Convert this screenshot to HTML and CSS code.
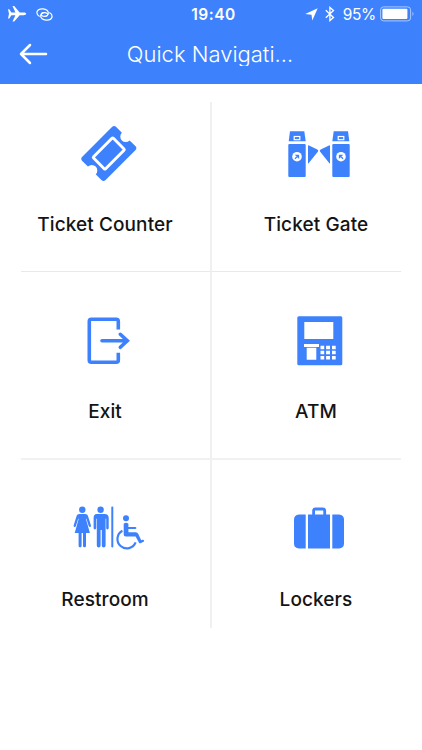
FILE: index.html
```html
<!DOCTYPE html>
<html lang="en">
<head>
    <meta charset="UTF-8">
    <meta name="viewport" content="width=device-width, initial-scale=1.0">
    <title>Quick Navigation</title>
    <link rel="stylesheet" href="styles.css">
</head>
<body>
    <header class="header">
        <div class="status-bar">
            <div class="status-left">
                <svg width="19" height="18" viewBox="0 0 19 18" fill="#fff">
                    <path d="M0 4.2h1.3l2.1 3.2h4L4.5 1h1.7l5.5 6.400h4.1c1.300 0 2.400.6 2.400 1.400s-1.100 1.400-2.400 1.400h-4.100l-5.500 6.400H4.500l2.900-6.400h-4l-2.100 3.200H0l1-4.600z"/>
                </svg>
                <svg width="17" height="13" viewBox="0 0 18 14" fill="none" stroke="#fff" stroke-width="1.300" stroke-linecap="round">
                    <path d="M3.400 8.800C1.400 7.700.6 6 .9 4.300 1.500 1.900 4.400.8 7.400 1c3.500.3 6 2.200 5.700 4.700-.2 2-2 3.300-4.300 3.300-2 0-3.400-1-3.200-2.300.1-.9.9-1.500 1.900-1.700"/>
                    <path d="M14.600 5.200c2 1.100 2.800 2.800 2.500 4.500-.6 2.400-3.500 3.500-6.500 3.300-3.500-.3-6-2.200-5.700-4.700.2-2 2-3.300 4.300-3.300 2 0 3.400 1 3.200 2.300-.1.9-.9 1.500-1.900 1.700"/>
                </svg>
            </div>
            <div class="status-time">19:40</div>
            <div class="status-right">
                <svg class="location" width="13" height="13" viewBox="0 0 13 13" fill="#fff">
                    <path d="M12.700.3 7.300 12.600 6.500 6.700.2 6z"/>
                </svg>
                <svg class="bluetooth" width="10" height="16" viewBox="0 0 10 16" fill="none" stroke="#fff" stroke-width="1.300">
                    <path d="M.8 4.300 8.500 11.500 4.900 14.600V1.400l3.600 3.100L.8 11.700"/>
                </svg>
                <span class="percent">95%</span>
                <svg width="35" height="16" viewBox="0 0 35 16">
                    <rect x=".6" y=".9" width="30" height="14" rx="3" fill="none" stroke="#a9c8ff" stroke-width="1"/>
                    <rect x="2.400" y="2.700" width="25" height="10.400" rx="1" fill="#fff"/>
                    <path d="M32.500 5.500q2 2.400 0 4.800z" fill="#a9c8ff"/>
                </svg>
            </div>
        </div>
        <div class="nav-bar">
            <a class="back" href="#" aria-label="Back">
                <svg width="30" height="24" viewBox="0 0 30 24" fill="none" stroke="#fff" stroke-width="2.500" stroke-linecap="round" stroke-linejoin="round">
                    <path d="M27 12H2M11 3 2 12l9 9"/>
                </svg>
            </a>
            <h1 class="title">Quick Navigati…</h1>
        </div>
    </header>

    <main class="grid">
        <a class="item" href="#">
            <svg class="icon" viewBox="0 0 90 80">
                <g transform="translate(48.800 40.500) rotate(-45)">
                    <path d="M-21-16.500h42q3 0 3 3v8a5.500 5.500 0 0 0 0 11v8q0 3-3 3h-42q-3 0-3-3v-8a5.500 5.500 0 0 0 0-11v-8q0-3 3-3z"/>
                    <rect class="line" x="-14" y="-8.500" width="28" height="17" rx="1" stroke-width="2.900"/>
                </g>
            </svg>
            <span class="label">Ticket Counter</span>
        </a>
        <a class="item" href="#">
            <svg class="icon" viewBox="0 0 90 80">
                <defs>
                    <g id="gate">
                        <path d="M19 18.300h14.300l1.400 10H17.700z"/>
                        <rect x="17.300" y="31" width="17.400" height="33" rx="1"/>
                        <rect class="line" x="23.200" y="23.500" width="5.600" height="3.200" stroke-width="1.200"/>
                        <circle class="cut" cx="26" cy="43.700" r="4.800"/>
                        <path d="M24 45.700 26.300 43.400M25.300 42.300h2.200v2.200z" stroke="#3d82fc" stroke-width="1.300"/>
                        <path d="M37 33q0-1 1-.5l8.300 4q1.500.8.700 2L37.800 50q-.8 1-.8 0z"/>
                    </g>
                </defs>
                <use href="#gate"/>
                <use href="#gate" transform="translate(96 0) scale(-1 1)"/>
            </svg>
            <span class="label">Ticket Gate</span>
        </a>
        <a class="item" href="#">
            <svg class="icon outline" viewBox="0 0 90 80">
                <path d="M58.300 28.500V20.300q0-2-2-2H31.300q-2 0-2 2v39q0 2 2 2h25q2 0 2-2v-7.600" stroke-width="3.600"/>
                <path d="M42 39.800h24.500M60.300 33.300l7 6.500-7 6.500" stroke-width="3.600" stroke-linecap="round"/>
            </svg>
            <span class="label">Exit</span>
        </a>
        <a class="item" href="#">
            <svg class="icon" viewBox="0 0 90 80">
                <rect x="26.300" y="15.300" width="45" height="49" rx="1.500"/>
                <rect class="cut" x="33.300" y="21" width="29" height="17"/>
                <path class="cut" d="M33 43h15v3H33zM35.700 46.700h9.600v12h-9.600z"/>
                <path class="cut" d="M49.500 44.700h3.700v3.500h-3.700zM55.100 44.700h3.900v3.500h-3.900zM61 44.700h3.700v3.500H61zM49.500 49.800h3.700v3.500h-3.700zM55.100 49.800h3.900v3.500h-3.900zM61 49.800h3.700v3.500H61zM49.500 54.900h3.700v3.500h-3.700zM55.100 54.900h3.900v3.500h-3.900zM61 54.900h3.700v3.500H61z"/>
            </svg>
            <span class="label">ATM</span>
        </a>
        <a class="item" href="#">
            <svg class="icon" viewBox="0 0 90 80">
                <circle cx="22.300" cy="21.700" r="3.200"/>
                <path d="M19.500 26h5.600c1.600 0 2.500.8 3 2.300l2.800 9c.5 1.800-1.500 2.500-2.200.8l-2.300-7.400h-.5l4 14.300H26v12.800c0 2-3 2-3 0V45h-1.400v12.800c0 2-3 2-3 0V45h-3.900l4-14.300h-.5l-2.300 7.400c-.7 1.700-2.700 1-2.200-.8l2.800-9c.5-1.500 1.400-2.300 3-2.300z"/>
                <circle cx="40.600" cy="21.700" r="3.200"/>
                <path d="M36.500 26h8.200c2.600 0 4 1.500 4 4v10c0 1.900-2.500 1.900-2.500 0v-9.200h-.6v26.700c0 2.500-3.800 2.500-3.800 0V42h-1.200v15.500c0 2.500-3.800 2.500-3.800 0V30.800h-.6V40c0 1.900-2.600 1.900-2.600 0V30c0-2.500 1.300-4 2.900-4z"/>
                <rect x="51.300" y="18.500" width="2" height="41" rx="1"/>
                <circle cx="66" cy="30.300" r="3"/>
                <path d="M63.700 35.700q2.300-2 4.700 0v3.200h6.700q1.300.1 1.300 1.100t-1.300 1.100h-6.700v3.200h7.400q1.700 0 2.400 1.500l3 6.500 1.300-.6q1.500-.2 1.700 1.100 0 .7-.7 1l-3 1.400q-1.100.3-1.600-.8L75.600 48.500H65.700q-2 0-2-2z"/>
                <path class="wheel" d="M62.400 42.700a9.400 9.400 0 1 0 13.200 11.700"/>
            </svg>
            <span class="label">Restroom</span>
        </a>
        <a class="item" href="#">
            <svg class="icon" viewBox="0 0 90 80">
                <path d="M28 26.500h6.700v34H28q-5-.5-5-5v-24q0-4.500 5-5zM37 26.500h22v34H37zM61.300 26.500H68q5 .5 5 5v24q0 4.500-5 5h-6.700z"/>
                <path class="handle" d="M42.600 27v-4.200q0-1.800 1.800-1.800h7.500q1.800 0 1.800 1.800V27"/>
            </svg>
            <span class="label">Lockers</span>
        </a>
    </main>
</body>
</html>
```

FILE: styles.css
```css
body {
    margin: 0;
    min-height: 100vh;
    background-color: #fff;
    font-family: 'Inter', 'Liberation Sans', sans-serif;
    color: #141414;
}

.header {
    height: 84px;
    background-color: #3d82fc;
    color: #fff;
}

.status-bar {
    display: grid;
    grid-template-columns: 1fr auto 1fr;
    align-items: center;
    height: 28px;
    padding: 0 7px 0 8px;
    box-sizing: border-box;
}

.status-left,
.status-right {
    display: flex;
    align-items: center;
}

.status-left {
    gap: 9px;
}

.status-right {
    justify-content: flex-end;
}

.status-time {
    font-size: 15.5px;
    font-weight: 600;
    letter-spacing: 0.5px;
    padding-left: 4px;
}

.location {
    margin-right: 7px;
}

.bluetooth {
    margin-right: 8px;
}

.percent {
    font-size: 15.5px;
    letter-spacing: -0.3px;
    margin-right: 4px;
}

.nav-bar {
    display: grid;
    grid-template-columns: 60px 1fr 60px;
    align-items: center;
    height: 52px;
}

.back {
    display: flex;
    padding-left: 19px;
}

.title {
    margin: 0 2px 0 0;
    font-size: 22px;
    font-weight: 350;
    line-height: 24px;
    letter-spacing: 0;
    text-align: center;
    white-space: nowrap;
    overflow: hidden;
}

.grid {
    display: grid;
    grid-template-columns: 191px 189px;
    grid-template-rows: 170px 188px 168px;
    margin: 18px 21px 0;
}

.item {
    display: flex;
    flex-direction: column;
    align-items: center;
    box-sizing: border-box;
    padding-top: 29px;
    border-bottom: 2px solid #f1f1f1;
    color: inherit;
    text-decoration: none;
}

.item:nth-child(odd) {
    padding-right: 21px;
    border-right: 2px solid #f0f0f0;
}

.item:nth-child(even) {
    padding-left: 19px;
}

.item:nth-child(-n+2) {
    padding-top: 11px;
    border-bottom: 1px solid #e9e9e9;
}

.item:nth-child(n+5) {
    padding-top: 28px;
    border-bottom: none;
}

.icon {
    width: 90px;
    height: 80px;
    fill: #3d82fc;
}

.icon .cut {
    fill: #fff;
}

.icon .line {
    fill: none;
    stroke: #fff;
}

.icon .wheel,
.icon .handle {
    fill: none;
    stroke: #3d82fc;
    stroke-width: 2.2;
}

.icon .handle {
    stroke-width: 2.8;
}

.icon.outline {
    fill: none;
    stroke: #3d82fc;
}

.label {
    margin-top: 20px;
    font-size: 19px;
    font-weight: 500;
    line-height: 24px;
    letter-spacing: 0.1px;
    white-space: nowrap;
}

.item:nth-child(3) .label,
.item:nth-child(4) .label {
    margin-top: 19px;
}
```
